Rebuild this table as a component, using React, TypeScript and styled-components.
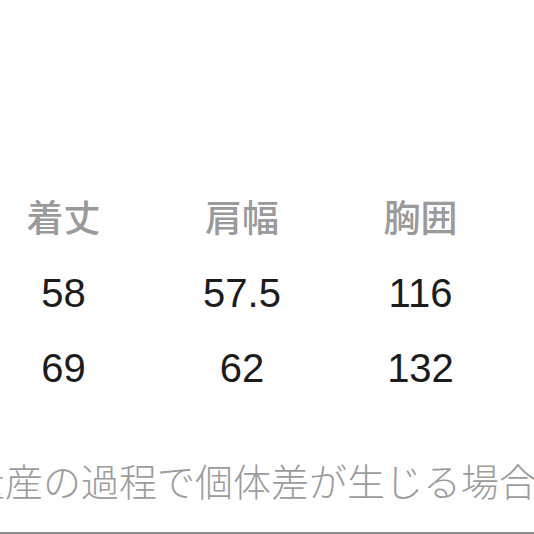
import { createGlobalStyle, styled } from "styled-components";

const GlobalStyle = createGlobalStyle`
  html,
  body {
    margin: 0;
    padding: 0;
    background: #ffffff;
  }
`;

const Page = styled.div`
  width: 534px;
  height: 534px;
  overflow: hidden;

  display: flex;
  flex-direction: column;
`;

const SizeTable = styled.div`
  margin-top: 198px;

  display: flex;
  flex-direction: column;
  gap: 35px;
`;

const TableRow = styled.div<{ $head?: boolean }>`
  display: grid;
  grid-template-columns: repeat(3, 127px);
  column-gap: 51.5px;

  margin-bottom: ${(props) => (props.$head ? "3px" : "0")};
`;

const HeadCell = styled.div`
  text-align: center;
  color: #9a9a9a;

  font-family: "Noto Sans CJK JP", sans-serif;
  font-size: 37px;
  font-weight: 500;
  line-height: 1;
`;

const ValueCell = styled.div`
  text-align: center;
  color: #1c1c1c;

  font-family: "Liberation Sans", Arial, sans-serif;
  font-size: 40px;
  font-weight: 400;
  line-height: 1;
`;

const Note = styled.p`
  margin: 73px 0 0 -33px;

  white-space: nowrap;
  color: #9c9c9c;

  font-family: "Noto Sans CJK JP", sans-serif;
  font-size: 38px;
  font-weight: 300;
  line-height: 1;
`;

const BottomRule = styled.div`
  margin-top: auto;
  height: 2px;
  background: #8c8c8c;
`;

const heads = ["着丈", "肩幅", "胸囲"];

const rows = [
  ["58", "57.5", "116"],
  ["69", "62", "132"],
];

const App = () => {
  return (
    <Page>
      <GlobalStyle />
      <SizeTable>
        <TableRow $head>
          {heads.map((h) => (
            <HeadCell key={h}>{h}</HeadCell>
          ))}
        </TableRow>
        {rows.map((row, i) => (
          <TableRow key={i}>
            {row.map((v, j) => (
              <ValueCell key={j}>{v}</ValueCell>
            ))}
          </TableRow>
        ))}
      </SizeTable>
      <Note>量産の過程で個体差が生じる場合があります。</Note>
      <BottomRule />
    </Page>
  );
};

export default App;
